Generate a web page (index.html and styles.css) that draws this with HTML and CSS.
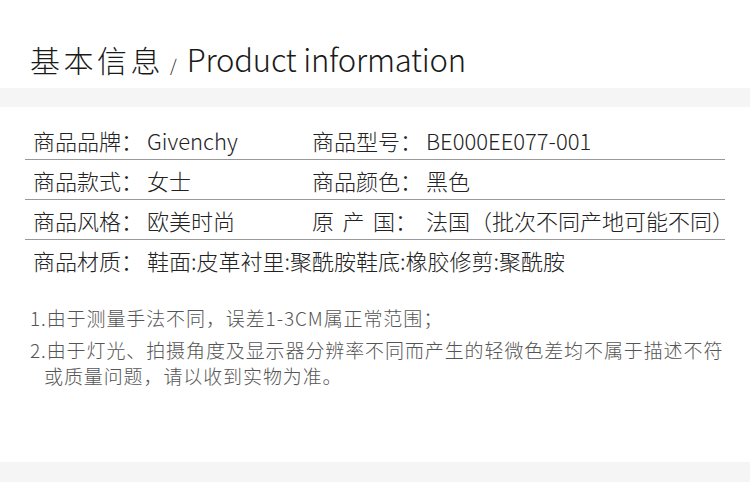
FILE: index.html
```html
<!DOCTYPE html>
<html lang="zh-CN">
<head>
    <meta charset="UTF-8">
    <meta name="viewport" content="width=device-width, initial-scale=1.0">
    <title>基本信息</title>
    <link rel="stylesheet" href="styles.css">
</head>
<body>
    <!-- Title -->
    <div class="header">
        <h1 class="title"><span class="title-cn">基本信息</span><span class="title-sep">/</span><span class="title-en">Product information</span></h1>
    </div>
    <div class="band"></div>

    <div class="content">
        <!-- Info table -->
        <div class="info-table">
            <div class="row">
                <div class="cell"><span class="label">商品品牌：</span><span class="value">Givenchy</span></div>
                <div class="cell"><span class="label">商品型号：</span><span class="value">BE000EE077-001</span></div>
            </div>
            <div class="row">
                <div class="cell"><span class="label">商品款式：</span><span class="value">女士</span></div>
                <div class="cell"><span class="label">商品颜色：</span><span class="value">黑色</span></div>
            </div>
            <div class="row">
                <div class="cell"><span class="label">商品风格：</span><span class="value">欧美时尚</span></div>
                <div class="cell"><span class="label"><span class="spread">原产国</span>：</span><span class="value">法国（批次不同产地可能不同）</span></div>
            </div>
            <div class="row row-full">
                <div class="cell"><span class="label">商品材质：</span><span class="value">鞋面:皮革衬里:聚酰胺鞋底:橡胶修剪:聚酰胺</span></div>
            </div>
        </div>

        <!-- Notes -->
        <div class="notes">
            <p>1.由于测量手法不同，误差1-3CM属正常范围；</p>
            <p>2.由于灯光、拍摄角度及显示器分辨率不同而产生的轻微色差均不属于描述不符或质量问题，请以收到实物为准。</p>
        </div>
    </div>
    <div class="band band-bottom"></div>
</body>
</html>
```

FILE: styles.css
```css
body {
    margin: 0;
    background-color: #fff;
    font-family: "Noto Sans CJK SC", "Noto Sans", sans-serif;
    color: #333;
    width: 750px;
}
.header {
    height: 88px;
    padding: 0 30px;
    box-sizing: border-box;
}
.title {
    margin: 0;
    padding-top: 36px;
    font-weight: 300;
    line-height: 44px;
    color: #1a1a1a;
    white-space: nowrap;
}
.title-cn {
    font-size: 30px;
    letter-spacing: 3.5px;
}
.title-sep {
    font-size: 17px;
    margin: 0 10px 0 6px;
}
.title-en {
    font-size: 31px;
    letter-spacing: -0.2px;
}
.band {
    height: 19px;
    background-color: #f5f5f5;
}
.content {
    height: 355px;
    padding: 13px 25px 0;
    box-sizing: border-box;
}
.info-table {
    font-size: 22px;
    font-weight: 300;
    color: #222;
}
.row {
    display: grid;
    grid-template-columns: 279px 1fr;
    height: 40px;
    align-items: center;
    border-bottom: 1px solid #999;
    box-sizing: border-box;
}
.row-full {
    grid-template-columns: 1fr;
    border-bottom: none;
}
.cell {
    display: flex;
    padding-left: 8px;
    white-space: nowrap;
}
.label {
    width: 114px;
    flex-shrink: 0;
}
.spread {
    display: inline-block;
    width: 83px;
    text-align: justify;
    text-align-last: justify;
}
.notes {
    margin-top: 25px;
    padding-left: 5px;
    font-size: 19px;
    font-weight: 300;
    letter-spacing: 0.9px;
    color: #555;
}
.notes p {
    margin: 0 0 6px;
    line-height: 26px;
    padding-left: 14px;
    text-indent: -14px;
}
.band-bottom {
    height: 20px;
}
```
